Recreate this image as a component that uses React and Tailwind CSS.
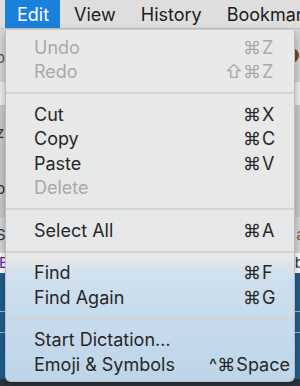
const items = [
  { label: "Undo", mods: "⌘", key: "Z", disabled: true },
  { label: "Redo", mods: "⇧⌘", key: "Z", disabled: true },
  "sep",
  { label: "Cut", mods: "⌘", key: "X" },
  { label: "Copy", mods: "⌘", key: "C" },
  { label: "Paste", mods: "⌘", key: "V" },
  { label: "Delete", disabled: true },
  "sep",
  { label: "Select All", mods: "⌘", key: "A" },
  "sep",
  { label: "Find", mods: "⌘", key: "F" },
  { label: "Find Again", mods: "⌘", key: "G" },
  "sep",
  { label: "Start Dictation…" },
  { label: "Emoji & Symbols", mods: "^⌘", key: "Space" },
];

function MenuRow({ item }) {
  const color = item.disabled ? "text-[#a9a9a9]" : "text-[#272727]";
  return (
    <div className={`flex h-[24.5px] items-center justify-between pl-[28px] pr-[4px] ${color}`}>
      <span>{item.label}</span>
      {item.key && (
        <span className="flex items-center">
          <span className="text-right">{item.mods}</span>
          <span className="min-w-[29px] pl-[1px] text-left">{item.key}</span>
        </span>
      )}
    </div>
  );
}

export default function App() {
  return (
    <div className="relative h-[386px] w-[300px] overflow-hidden font-['Inter','DejaVu_Sans',sans-serif] text-[18px]">
      {/* Menu bar */}
      <div className="flex h-[29px] items-center border-b border-[#c4c4c4] bg-[#dedede] text-[#1c1c1c]">
        <div className="ml-[5px] flex h-full items-center bg-[#1b7fdc] pl-[12px] pr-[11px] text-white">Edit</div>
        <div className="ml-[14px]">View</div>
        <div className="ml-[25px]">History</div>
        <div className="ml-[25px] whitespace-nowrap">Bookmarks</div>
      </div>

      {/* Page content behind the menu */}
      <div className="flex flex-col text-[15px]">
        <div className="flex h-[53px] items-center justify-between bg-[#d7d7d7] pr-[1px] text-[#555]">
          <span className="-ml-[4px] pt-[6px]">o</span>
          <span className="h-[15px] w-[15px] rounded-full bg-[#7a4a18]"></span>
        </div>
        <div className="h-[23px] bg-[#efefef]"></div>
        <div className="flex h-[112px] flex-col justify-around bg-[#cbcbcb] text-[#333]">
          <span className="-ml-[4px]">z</span>
          <span className="-ml-[4px]">p</span>
        </div>
        <div className="flex h-[36px] items-center justify-between bg-[#d8d8d8] text-[#333]">
          <span className="-ml-[4px]">S</span>
          <span className="-mr-[5px] text-[#8a5a2a]">a</span>
        </div>
        <div className="flex h-[20px] items-center justify-between bg-white">
          <span className="-ml-[1px] text-[#5b2a9a]">E</span>
          <span className="-mr-[4px] text-[#333]">b</span>
        </div>
        <div className="h-[38px] bg-[#1f5f90]"></div>
        <div className="h-[1px] bg-[#9cc0dc]"></div>
        <div className="h-[20px] bg-[#1f5f90]"></div>
        <div className="h-[1px] bg-[#9cc0dc]"></div>
        <div className="h-[46px] bg-[#1f5f90]"></div>
        <div className="h-[10px] bg-[#2b3440]"></div>
      </div>

      {/* Edit menu */}
      <div className="absolute left-[5px] top-[30px] w-[290px] rounded-b-[6px] border border-t-0 border-[#b9bcc0] bg-[linear-gradient(to_bottom,#e9e9e9_0%,#e6e7e8_65%,#cfe0ee_70%,#bdd5e9_100%)] pb-[4px] pt-[5px] shadow-[0_4px_10px_rgba(0,0,0,0.3)]">
        {items.map((item, i) =>
          item === "sep" ? (
            <div key={i} className="flex h-[18px] items-center">
              <div className="h-[2px] w-full bg-[#d2d4d6]"></div>
            </div>
          ) : (
            <MenuRow key={i} item={item} />
          )
        )}
      </div>
    </div>
  );
}
